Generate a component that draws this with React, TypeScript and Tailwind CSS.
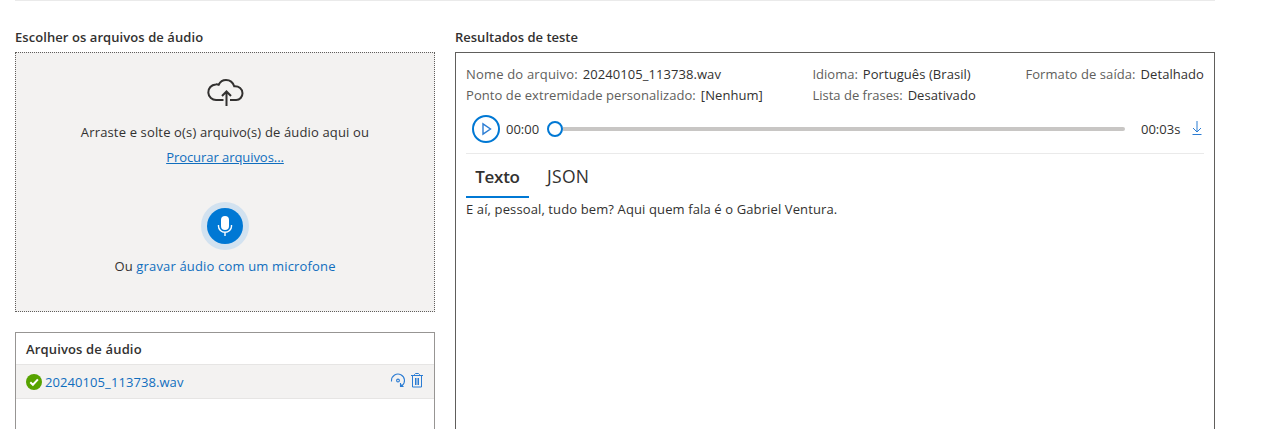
import React from "react";

function CloudUpload() {
  return (
    <svg className="ml-px" width="38" height="30" viewBox="0 0 38 30" fill="none" stroke="#323130" strokeWidth="2">
      <path d="M16.500 24H9.500a7.800 7.800 0 0 1-.8-15.600c1.100-.1 2-.1 3 .3C13.200 5.700 15.800 4 19 4c4 0 7 2.500 8.200 6.300 4.700-.3 8.300 2.500 8.300 7 0 3.700-2.700 6.700-6.300 6.700H23" />
      <path d="M19.500 30V15.500M15 20l4.500-4.500L24 20" />
    </svg>
  );
}

function Microphone() {
  return (
    <svg width="16" height="22" viewBox="0 0 16 22" fill="none">
      <rect x="4" y="1" width="8" height="14" rx="4" fill="white" />
      <path d="M1.500 10v1.300a6.500 6 0 0 0 13 0V10M8 17.500V21" stroke="white" strokeWidth="1.400" />
    </svg>
  );
}

function Check() {
  return (
    <svg width="16" height="16" viewBox="0 0 16 16" fill="none">
      <circle cx="8" cy="8" r="8" fill="#57a300" />
      <path d="M4.300 8.300l2.600 2.500 5-5.400" stroke="white" strokeWidth="2" />
    </svg>
  );
}

function Reprocess() {
  return (
    <svg className="-mt-[3px]" width="16" height="16" viewBox="0 0 16 16" fill="none" stroke="#2b7cd3" strokeWidth="1.100">
      <path d="M1.500 9.500V8.500a6.500 6.500 0 1 1 10.500 5.200" />
      <path d="M13.500 14.500h-3.500V11z" fill="#2b7cd3" stroke="none" />
      <path d="M13.500 14.500h-3V11" />
      <circle cx="8" cy="8.500" r="1.400" />
    </svg>
  );
}

function Trash() {
  return (
    <svg className="-mt-[3px]" width="12" height="15" viewBox="0 0 12 15" fill="none" stroke="#2b7cd3">
      <path d="M0 2.500h12M3.500 2.500V1.500l1-1h3l1 1v1M1.500 2.500v11.500h9v-11.500M4.500 5v7M6 5v7M7.500 5v7" />
    </svg>
  );
}

function Download() {
  return (
    <svg width="10" height="15" viewBox="0 0 10 15" fill="none" stroke="#2b7cd3">
      <path d="M5 0v11M1 7l4 4 4-4M.5 13.500h9" />
    </svg>
  );
}

function Field({ label, value, spacing }: { label: string; value: string; spacing: string }) {
  return (
    <div className="flex h-[21px] items-center gap-[5px] whitespace-nowrap">
      <span className={`text-[#605e5c] ${spacing}`}>{label}</span>
      <span className="tracking-[0.06px]">{value}</span>
    </div>
  );
}

export default function App() {
  return (
    <div className="h-[429px] w-[1277px] overflow-hidden bg-white pl-[15px] font-['Open_Sans',sans-serif] text-[13px] leading-5 text-[#323130]">
      <div className="h-px w-[1200px] bg-[#eaeaea]" />
      <div className="flex gap-5 pt-[26px]">
        <section className="w-[420px]">
          <h2 className="h-[25px] font-semibold tracking-[0.07px]">Escolher os arquivos de áudio</h2>
          <div className="flex h-[260px] flex-col items-center border border-dotted border-[#605e5c] bg-[#f3f2f1] pt-[23px]">
            <CloudUpload />
            <p className="mt-[16px] tracking-[0.15px]">Arraste e solte o(s) arquivo(s) de áudio aqui ou</p>
            <a className="mt-[5px] tracking-[-0.06px] text-[#106ebe] underline">Procurar arquivos...</a>
            <div className="mt-[35px] flex size-[48px] shrink-0 items-center justify-center rounded-full bg-[#d2e2f0]">
              <div className="flex size-9 items-center justify-center rounded-full bg-[#0078d4]">
                <Microphone />
              </div>
            </div>
            <p className="mt-[6px] tracking-[0.16px]">
              Ou <a className="text-[#106ebe]">gravar áudio com um microfone</a>
            </p>
          </div>
          <div className="mt-5 h-[110px] border border-[#979593]">
            <h2 className="h-[31px] pt-[6px] pl-[10px] font-semibold tracking-[0.15px]">Arquivos de áudio</h2>
            <div className="flex h-[35px] items-center border-y border-[#e6e5e4] bg-[#f3f2f1] pr-[11px] pl-[10px]">
              <Check />
              <a className="ml-[3px] tracking-[0.08px] text-[#106ebe]">20240105_113738.wav</a>
              <div className="ml-auto flex items-center gap-[5px]">
                <Reprocess />
                <Trash />
              </div>
            </div>
          </div>
        </section>
        <section className="w-[760px]">
          <h2 className="h-[25px] font-semibold">Resultados de teste</h2>
          <div className="h-[390px] border border-[#605e5c] px-[10px] pt-[10px]">
            <div className="flex justify-between">
              <div>
                <Field label="Nome do arquivo:" value="20240105_113738.wav" spacing="tracking-[0.18px]" />
                <Field label="Ponto de extremidade personalizado:" value="[Nenhum]" spacing="tracking-[0.07px]" />
              </div>
              <div>
                <Field label="Idioma:" value="Português (Brasil)" spacing="" />
                <Field label="Lista de frases:" value="Desativado" spacing="" />
              </div>
              <Field label="Formato de saída:" value="Detalhado" spacing="tracking-[0.08px]" />
            </div>
            <div className="flex h-[49px] items-center border-b border-[#eaeaea] pb-px pl-[6px]">
              <div className="flex size-7 items-center justify-center rounded-full border-2 border-[#0078d4]">
                <svg width="12" height="14" viewBox="0 0 12 14" fill="none" stroke="#2b7cd3" strokeWidth="1.400">
                  <path d="M3 1.800v10.400L10.500 7z" />
                </svg>
              </div>
              <span className="ml-[6px] w-[41px]">00:00</span>
              <div className="flex w-[578px] items-center">
                <div className="size-4 rounded-full border-2 border-[#0078d4] bg-white" />
                <div className="h-1 flex-1 rounded-r-full bg-[#c8c6c4]" />
              </div>
              <span className="ml-4 w-[51px]">00:03s</span>
              <Download />
            </div>
            <div className="flex h-[44px] text-[17px]">
              <div className="flex w-[63px] justify-center border-b-2 border-[#0078d4] pt-[13px] font-semibold tracking-[-0.3px]">Texto</div>
              <div className="ml-[18px] pt-3 text-[17.500px] tracking-[0.3px]">JSON</div>
            </div>
            <p className="mt-px tracking-[0.12px]">E aí, pessoal, tudo bem? Aqui quem fala é o Gabriel Ventura.</p>
          </div>
        </section>
      </div>
    </div>
  );
}
